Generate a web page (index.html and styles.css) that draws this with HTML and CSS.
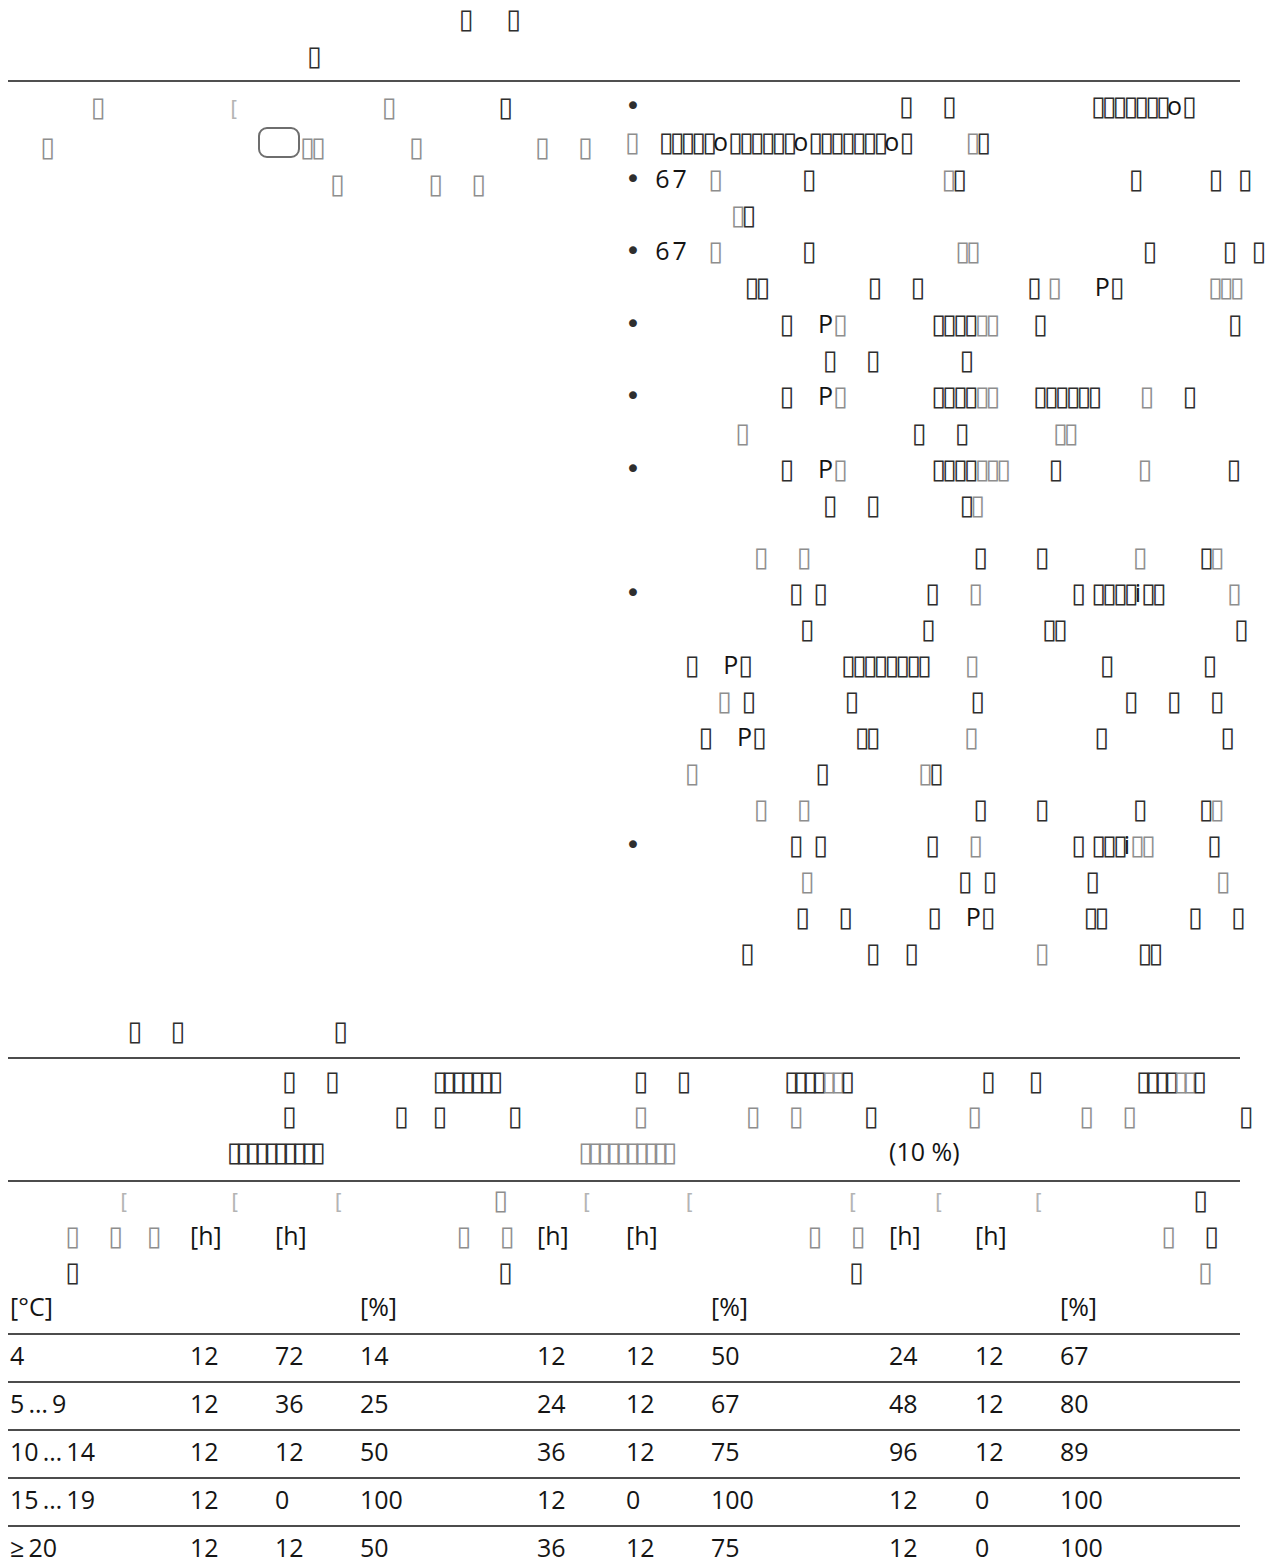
FILE: index.html
```html
<!DOCTYPE html>
<html lang="de">
<head>
<meta charset="utf-8">
<title>Tabelle</title>
<link rel="stylesheet" href="styles.css">
</head>
<body>
<div class="page">
  <header class="top">
<div class="ln">&emsp;&emsp;&emsp;&emsp;&emsp;&emsp;&emsp;&emsp;&emsp;&emsp;&emsp;&emsp;&emsp;&emsp;&emsp;&emsp;&emsp;&emsp;&emsp;   ▯&emsp;   ▯</div>
<div class="ln">&emsp;&emsp;&emsp;&emsp;&emsp;&emsp;&emsp;&emsp;&emsp;&emsp;&emsp;&emsp;&emsp;▯</div>
  </header>
  <hr class="rule">
  <section class="cols">
    <div class="left">
<div class="ln">&emsp;&emsp;&emsp;   <span class="g">▯</span>&emsp;&emsp;&emsp;&emsp;&emsp;   <span class="gl">[</span>&emsp;&emsp;&emsp;&emsp;&emsp;&emsp;  <span class="g">▯</span>&emsp;&emsp;&emsp;&emsp;   ▯</div>
<div class="ln">&emsp;  <span class="g">▯</span>&emsp;&emsp;&emsp;&emsp;&emsp;&emsp;&emsp;&emsp;&emsp;<span class="key"></span><span class="g">▯▯</span>&emsp;&emsp;&emsp;    <span class="g">▯</span>&emsp;&emsp;&emsp;&emsp;     <span class="g">▯</span>&emsp;  <span class="g">▯</span></div>
<div class="ln">&emsp;&emsp;&emsp;&emsp;&emsp;&emsp;&emsp;&emsp;&emsp;&emsp;&emsp;&emsp;&emsp;&emsp;<span class="g">▯</span>&emsp;&emsp;&emsp;    <span class="g">▯</span>&emsp;  <span class="g">▯</span></div>
    </div>
    <div class="right">
      <ul class="list">
        <li>
<div class="ln">•&emsp;&emsp;&emsp;&emsp;&emsp;&emsp;&emsp;&emsp;&emsp;&emsp;&emsp;  ▯&emsp;  ▯&emsp;&emsp;&emsp;&emsp;&emsp;     ▯▯▯▯▯▯▯<span class="l">o</span>▯</div>
<div class="ln"><span class="g">▯</span>     ▯▯▯▯▯<span class="l">o</span>▯▯▯▯▯▯<span class="l">o</span>▯▯▯▯▯▯▯<span class="l">o</span>▯&emsp;&emsp;  <span class="g">▯</span>▯</div>
        </li>
        <li>
<div class="ln">•    <span class="l d67">67</span>    <span class="g">▯</span>&emsp;&emsp;&emsp;   ▯&emsp;&emsp;&emsp;&emsp;&emsp;   <span class="g">▯</span>▯&emsp;&emsp;&emsp;&emsp;&emsp;&emsp;&emsp; ▯&emsp;&emsp;&emsp;▯    ▯</div>
<div class="ln">&emsp;&emsp;&emsp;&emsp;   <span class="g">▯</span>▯</div>
        </li>
        <li>
<div class="ln">•    <span class="l d67">67</span>    <span class="g">▯</span>&emsp;&emsp;&emsp;   ▯&emsp;&emsp;&emsp;&emsp;&emsp;&emsp; <span class="g">▯▯</span>&emsp;&emsp;&emsp;&emsp;&emsp;&emsp;&emsp; ▯&emsp;&emsp;&emsp;▯    ▯</div>
<div class="ln">&emsp;&emsp;&emsp;&emsp;&emsp; ▯▯&emsp;&emsp;&emsp;&emsp;  ▯&emsp;  ▯&emsp;&emsp;&emsp;&emsp;   ▯  <span class="g">▯</span>&emsp;   <span class="l">P</span>▯&emsp;&emsp;&emsp;    <span class="g">▯▯▯</span></div>
        </li>
        <li>
<div class="ln">•&emsp;&emsp;&emsp;&emsp;&emsp;&emsp; ▯&emsp; <span class="l">P</span><span class="g">▯</span>&emsp;&emsp;&emsp;    ▯▯▯▯<span class="g">▯▯</span>&emsp;   ▯&emsp;&emsp;&emsp;&emsp;&emsp;&emsp;&emsp;     ▯</div>
<div class="ln">&emsp;&emsp;&emsp;&emsp;&emsp;&emsp;&emsp;&emsp;   ▯&emsp;  ▯&emsp;&emsp;&emsp;   ▯</div>
        </li>
        <li>
<div class="ln">•&emsp;&emsp;&emsp;&emsp;&emsp;&emsp; ▯&emsp; <span class="l">P</span><span class="g">▯</span>&emsp;&emsp;&emsp;    ▯▯▯▯<span class="g">▯▯</span>&emsp;   ▯▯▯▯▯▯&emsp;    <span class="g">▯</span>&emsp;  ▯</div>
<div class="ln">&emsp;&emsp;&emsp;&emsp;    <span class="g">▯</span>&emsp;&emsp;&emsp;&emsp;&emsp;&emsp;&emsp; ▯&emsp;  ▯&emsp;&emsp;&emsp;    <span class="g">▯▯</span></div>
        </li>
        <li>
<div class="ln">•&emsp;&emsp;&emsp;&emsp;&emsp;&emsp; ▯&emsp; <span class="l">P</span><span class="g">▯</span>&emsp;&emsp;&emsp;    ▯▯▯▯<span class="g">▯▯▯</span>&emsp;    ▯&emsp;&emsp;&emsp;  <span class="g">▯</span>&emsp;&emsp;&emsp;  ▯</div>
<div class="ln">&emsp;&emsp;&emsp;&emsp;&emsp;&emsp;&emsp;&emsp;   ▯&emsp;  ▯&emsp;&emsp;&emsp;   ▯<span class="g">▯</span></div>
        </li>
      </ul>
      <div class="group">
<div class="ln">&emsp;&emsp;&emsp;&emsp;&emsp;   <span class="g">▯</span>&emsp;  <span class="g">▯</span>&emsp;&emsp;&emsp;&emsp;&emsp;&emsp;&emsp; ▯&emsp;&emsp; ▯&emsp;&emsp;&emsp;    <span class="g">▯</span>&emsp;&emsp;  ▯<span class="g">▯</span></div>
        <ul class="list">
          <li>
<div class="ln">•&emsp;&emsp;&emsp;&emsp;&emsp;&emsp;   ▯   ▯&emsp;&emsp;&emsp;&emsp;  ▯&emsp;  <span class="g">▯</span>&emsp;&emsp;&emsp;&emsp;▯  ▯▯▯▯<span class="l">i</span>▯▯&emsp;&emsp;    <span class="g">▯</span></div>
<div class="ln">&emsp;&emsp;&emsp;&emsp;&emsp;&emsp;&emsp;   ▯&emsp;&emsp;&emsp;&emsp;    ▯&emsp;&emsp;&emsp;&emsp;    ▯▯&emsp;&emsp;&emsp;&emsp;&emsp;&emsp;&emsp;  ▯</div>
<div class="ln">&emsp;&emsp;   ▯&emsp; <span class="l">P</span>▯&emsp;&emsp;&emsp;     ▯▯▯▯▯▯▯▯&emsp;   <span class="g">▯</span>&emsp;&emsp;&emsp;&emsp;&emsp;  ▯&emsp;&emsp;&emsp;     ▯</div>
<div class="ln">&emsp;&emsp;&emsp;&emsp;<span class="g">▯</span>   ▯&emsp;&emsp;&emsp;&emsp;▯&emsp;&emsp;&emsp;&emsp;&emsp;▯&emsp;&emsp;&emsp;&emsp;&emsp;&emsp; ▯&emsp;  ▯&emsp;  ▯</div>
<div class="ln">&emsp;&emsp;&emsp; ▯&emsp; <span class="l">P</span>▯&emsp;&emsp;&emsp;     ▯▯&emsp;&emsp;&emsp;    <span class="g">▯</span>&emsp;&emsp;&emsp;&emsp;&emsp; ▯&emsp;&emsp;&emsp;&emsp;&emsp;▯</div>
<div class="ln">&emsp;&emsp;   <span class="g">▯</span>&emsp;&emsp;&emsp;&emsp;&emsp; ▯&emsp;&emsp;&emsp;&emsp;<span class="g">▯</span>▯</div>
          </li>
        </ul>
<div class="ln">&emsp;&emsp;&emsp;&emsp;&emsp;   <span class="g">▯</span>&emsp;  <span class="g">▯</span>&emsp;&emsp;&emsp;&emsp;&emsp;&emsp;&emsp; ▯&emsp;&emsp; ▯&emsp;&emsp;&emsp;    ▯&emsp;&emsp;  ▯<span class="g">▯</span></div>
        <ul class="list">
          <li>
<div class="ln">•&emsp;&emsp;&emsp;&emsp;&emsp;&emsp;   ▯   ▯&emsp;&emsp;&emsp;&emsp;  ▯&emsp;  <span class="g">▯</span>&emsp;&emsp;&emsp;&emsp;▯  ▯▯▯<span class="l">i</span><span class="g">▯▯</span>&emsp;&emsp;  ▯</div>
<div class="ln">&emsp;&emsp;&emsp;&emsp;&emsp;&emsp;&emsp;   <span class="g">▯</span>&emsp;&emsp;&emsp;&emsp;&emsp;&emsp;  ▯   ▯&emsp;&emsp;&emsp;&emsp;▯&emsp;&emsp;&emsp;&emsp;&emsp; <span class="g">▯</span></div>
<div class="ln">&emsp;&emsp;&emsp;&emsp;&emsp;&emsp;&emsp;  ▯&emsp;  ▯&emsp;&emsp;&emsp;  ▯&emsp; <span class="l">P</span>▯&emsp;&emsp;&emsp;&emsp;▯▯&emsp;&emsp;&emsp;   ▯&emsp;  ▯</div>
<div class="ln">&emsp;&emsp;&emsp;&emsp;&emsp;▯&emsp;&emsp;&emsp;&emsp;&emsp;▯&emsp; ▯&emsp;&emsp;&emsp;&emsp;&emsp; <span class="g">▯</span>&emsp;&emsp;&emsp;     ▯▯</div>
          </li>
        </ul>
      </div>
    </div>
  </section>

  <h2 class="ttl"><span class="ln">&emsp;&emsp;&emsp;&emsp;&emsp; ▯&emsp;  ▯&emsp;&emsp;&emsp;&emsp;&emsp;&emsp;   ▯</span></h2>

  <table class="tbl">
    <colgroup>
      <col class="c1"><col class="c2"><col class="c3"><col class="c4"><col class="c5"><col class="c6"><col class="c7"><col class="c8"><col class="c9"><col class="c10">
    </colgroup>
    <thead>
      <tr class="h1">
        <td></td>
        <td colspan="3">
<div class="ln">&emsp;&emsp;&emsp;&emsp;▯&emsp;  ▯&emsp;&emsp;&emsp;&emsp; <span class="tq">▯▯▯▯▯▯▯</span></div>
<div class="ln">&emsp;&emsp;&emsp;&emsp;▯&emsp;&emsp;&emsp;&emsp;  ▯&emsp; ▯&emsp;&emsp;    ▯</div>
<div class="ln">&emsp;   <span class="tq">▯▯▯▯▯▯▯▯▯▯</span></div>
        </td>
        <td colspan="3">
<div class="ln">&emsp;&emsp;&emsp;&emsp; ▯&emsp;  ▯&emsp;&emsp;&emsp;&emsp; <span class="tq">▯▯▯▯<span class="g">▯▯</span>▯</span></div>
<div class="ln">&emsp;&emsp;&emsp;&emsp; <span class="g">▯</span>&emsp;&emsp;&emsp;&emsp;  <span class="g">▯</span>&emsp;  <span class="g">▯</span>&emsp;&emsp;    ▯</div>
<div class="ln">&emsp;    <span class="g tq">▯▯▯▯▯▯▯▯▯▯</span></div>
        </td>
        <td colspan="3">
<div class="ln">&emsp;&emsp;&emsp;&emsp;▯&emsp;   ▯&emsp;&emsp;&emsp;&emsp; <span class="tq">▯▯▯▯<span class="g">▯▯</span>▯</span></div>
<div class="ln">&emsp;&emsp;&emsp;  <span class="g">▯</span>&emsp;&emsp;&emsp;&emsp;  <span class="g">▯</span>&emsp;  <span class="g">▯</span>&emsp;&emsp;&emsp;&emsp;   ▯</div>
<div class="ln"><span class="l">(10 %)</span></div>
        </td>
      </tr>
      <tr class="h2">
        <td>
<div class="ln">&emsp;&emsp;&emsp;&emsp;    <span class="gl">[</span></div>
<div class="ln">&emsp;&emsp;  <span class="g">▯</span>&emsp;  <span class="g">▯</span>&emsp; <span class="g">▯</span></div>
<div class="ln">&emsp;&emsp;  ▯</div>
<div class="ln"><span class="l">[°C]</span></div>
        </td>
        <td>
<div class="ln">&emsp;    <span class="gl">[</span></div>
<div class="ln"><span class="l">[h]</span></div>
        </td>
        <td>
<div class="ln">&emsp;&emsp;   <span class="gl">[</span></div>
<div class="ln"><span class="l">[h]</span></div>
        </td>
        <td>
<div class="ln">&emsp;&emsp;&emsp;&emsp;&emsp;    <span class="g">▯</span></div>
<div class="ln">&emsp;&emsp;&emsp;&emsp; <span class="g">▯</span>&emsp;  <span class="g">▯</span></div>
<div class="ln">&emsp;&emsp;&emsp;&emsp;&emsp;&emsp;▯</div>
<div class="ln"><span class="l">[%]</span></div>
        </td>
        <td>
<div class="ln">&emsp;     <span class="gl">[</span></div>
<div class="ln"><span class="l">[h]</span></div>
        </td>
        <td>
<div class="ln">&emsp;&emsp;   <span class="gl">[</span></div>
<div class="ln"><span class="l">[h]</span></div>
        </td>
        <td>
<div class="ln">&emsp;&emsp;&emsp;&emsp;&emsp;     <span class="gl">[</span></div>
<div class="ln">&emsp;&emsp;&emsp;&emsp; <span class="g">▯</span>&emsp;  <span class="g">▯</span></div>
<div class="ln">&emsp;&emsp;&emsp;&emsp;&emsp;&emsp;▯</div>
<div class="ln"><span class="l">[%]</span></div>
        </td>
        <td>
<div class="ln">&emsp;     <span class="gl">[</span></div>
<div class="ln"><span class="l">[h]</span></div>
        </td>
        <td>
<div class="ln">&emsp;&emsp;   <span class="gl">[</span></div>
<div class="ln"><span class="l">[h]</span></div>
        </td>
        <td>
<div class="ln">&emsp;&emsp;&emsp;&emsp;&emsp;    ▯</div>
<div class="ln">&emsp;&emsp;&emsp;&emsp;  <span class="g">▯</span>&emsp;  ▯</div>
<div class="ln">&emsp;&emsp;&emsp;&emsp;&emsp;&emsp;<span class="g">▯</span></div>
<div class="ln"><span class="l">[%]</span></div>
        </td>
      </tr>
    </thead>
    <tbody class="data">
      <tr><td>4</td><td>12</td><td>72</td><td>14</td><td>12</td><td>12</td><td>50</td><td>24</td><td>12</td><td>67</td></tr>
      <tr><td>5&#8201;…&#8201;9</td><td>12</td><td>36</td><td>25</td><td>24</td><td>12</td><td>67</td><td>48</td><td>12</td><td>80</td></tr>
      <tr><td>10&#8201;…&#8201;14</td><td>12</td><td>12</td><td>50</td><td>36</td><td>12</td><td>75</td><td>96</td><td>12</td><td>89</td></tr>
      <tr><td>15&#8201;…&#8201;19</td><td>12</td><td>0</td><td>100</td><td>12</td><td>0</td><td>100</td><td>12</td><td>0</td><td>100</td></tr>
      <tr><td>≥&#8201;20</td><td>12</td><td>12</td><td>50</td><td>36</td><td>12</td><td>75</td><td>12</td><td>0</td><td>100</td></tr>
    </tbody>
  </table>
</div>
</body>
</html>
```
FILE: styles.css
```css
* { box-sizing: border-box; }
html, body { margin: 0; background: #fff; }
body { overflow-x: hidden; font-family: "DejaVu Sans", sans-serif; color: #2e2e2e; }

.page { width: 1232px; margin: 0 8px; }

.ln {
  display: block;
  white-space: pre;
  font-family: "DejaVu Sans", sans-serif;
  font-size: 27px;
  letter-spacing: -4px;
  line-height: 37px;
  height: 37px;
  color: #2e2e2e;
}

.l {
  font-family: "Open Sans", "DejaVu Sans", sans-serif;
  font-size: 25px;
  letter-spacing: 0;
  color: #141414;
  line-height: 0;
}
.d67 { letter-spacing: 3px; }
.g { color: #8e8e8e; }
.gl { color: #b4b4b4; font-size: 21px; }
.tq { letter-spacing: -5.5px; }

.key {
  display: inline-block;
  width: 42px;
  height: 31px;
  border: 2.5px solid #6e6e6e;
  border-radius: 9px;
  vertical-align: -2px;
}

.top { padding-top: 0; }

.rule {
  border: 0;
  height: 2px;
  background: #505050;
  margin: 6px 0 0;
}

.cols {
  display: grid;
  grid-template-columns: 617px 1fr;
  padding-top: 6px;
}
.left .ln { line-height: 38.5px; height: 38.5px; }
.right .ln { line-height: 36.3px; height: 36.3px; }
.right .group .ln { line-height: 36px; height: 36px; }

.list { list-style: none; margin: 0; padding: 0; }
.group { margin-top: 15px; }

.ttl {
  margin: 41px 0 0;
  font-weight: normal;
  font-size: 27px;
  height: 37px;
}

.tbl {
  width: 1232px;
  border-collapse: collapse;
  table-layout: fixed;
  margin-top: 8px;
}
.c1 { width: 180px; }
.c2 { width: 85px; }
.c3 { width: 85px; }
.c4 { width: 177px; }
.c5 { width: 89px; }
.c6 { width: 85px; }
.c7 { width: 178px; }
.c8 { width: 86px; }
.c9 { width: 85px; }
.c10 { width: 182px; }

.tbl tr { border-top: 2px solid #4c4c4c; }
.tbl td { padding: 0 0 0 2px; vertical-align: top; }
.tbl .ln { line-height: 35.6px; height: 35.6px; }
.h1 td { padding-top: 4px; padding-bottom: 11px; }
.h2 td { padding-top: 0; padding-bottom: 8px; }

.data td {
  height: 48px;
  padding-top: 3px;
  line-height: 34px;
  font-family: "Open Sans", "DejaVu Sans", sans-serif;
  font-size: 25px;
  color: #151515;
}
```
